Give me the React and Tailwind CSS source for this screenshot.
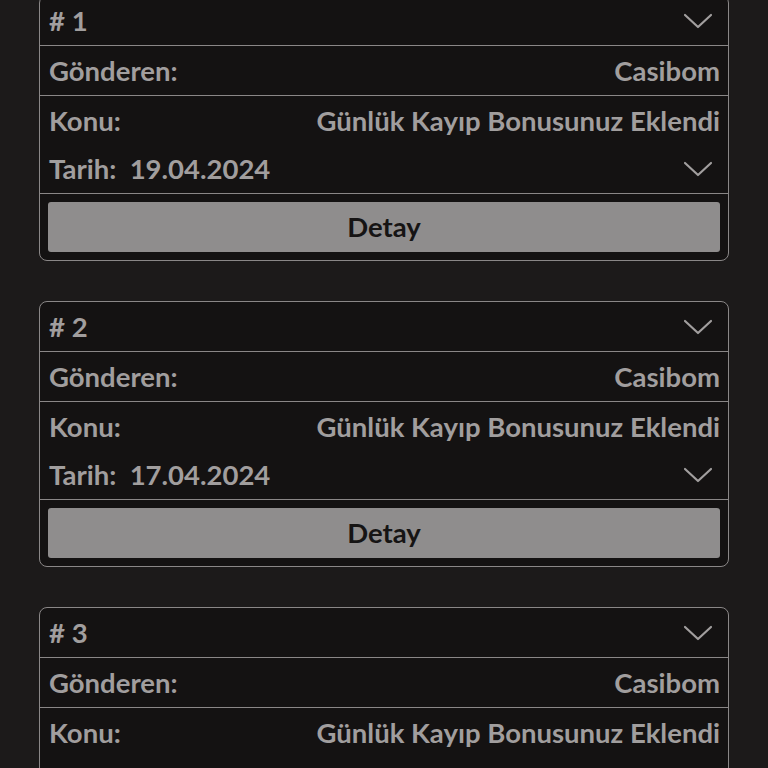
const mails = [
  { id: 1, sender: 'Casibom', subject: 'Günlük Kayıp Bonusunuz Eklendi', date: '19.04.2024' },
  { id: 2, sender: 'Casibom', subject: 'Günlük Kayıp Bonusunuz Eklendi', date: '17.04.2024' },
  { id: 3, sender: 'Casibom', subject: 'Günlük Kayıp Bonusunuz Eklendi', date: '15.04.2024' },
];

function Chevron() {
  return (
    <svg width="30" height="18" viewBox="0 0 30 18" fill="none" className="shrink-0">
      <path d="M2 3 L15 15 L28 3" stroke="#a19e9e" strokeWidth="2.2" strokeLinecap="round" strokeLinejoin="round" />
    </svg>
  );
}

function MailCard({ mail }) {
  return (
    <div className="rounded-lg border border-[#8a8787] bg-[#141212] overflow-hidden">
      {/* Header */}
      <div className="h-[50px] flex items-center justify-between pl-[9px] pr-[15px] border-b border-[#8a8787]">
        <span>#&nbsp;{mail.id}</span>
        <Chevron />
      </div>

      <div className="h-[50px] flex items-center justify-between pl-[9px] pr-[8px] border-b border-[#8a8787]">
        <span>Gönderen:</span>
        <span>{mail.sender}</span>
      </div>

      <div className="border-b border-[#8a8787]">
        <div className="h-[49px] flex items-center justify-between pl-[9px] pr-[8px]">
          <span>Konu:</span>
          <span>{mail.subject}</span>
        </div>
        <div className="h-[48px] flex items-center justify-between pl-[9px] pr-[15px]">
          <span>Tarih:&nbsp; {mail.date}</span>
          <Chevron />
        </div>
      </div>

      <div className="px-[8px] pt-[8px] pb-[8px]">
        <button className="w-full h-[50px] rounded-[3px] bg-[#8f8d8d] text-[#161414] text-center">
          Detay
        </button>
      </div>
    </div>
  );
}

export default function App() {
  return (
    <div
      className="h-screen bg-[#1c1a1a] text-[#a19e9e] text-[27.5px] font-bold px-[39px] overflow-hidden"
      style={{ fontFamily: 'Lato, "Noto Sans", sans-serif' }}
    >
      <div className="-mt-[5px] flex flex-col gap-[40px] pb-10">
        {mails.map((m) => (
          <MailCard key={m.id} mail={m} />
        ))}
      </div>
    </div>
  );
}
